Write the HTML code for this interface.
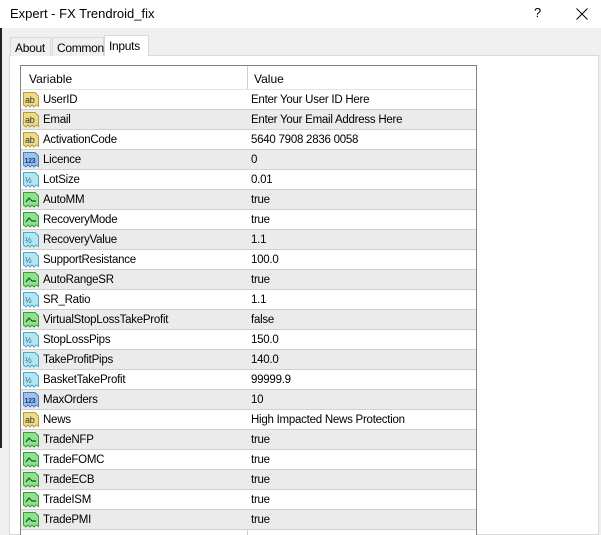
<!DOCTYPE html>
<html><head><meta charset="utf-8"><style>
*{margin:0;padding:0;box-sizing:border-box}
body{width:601px;height:531px;overflow:hidden;background:#f0f0f0;font-family:"Liberation Sans",Tahoma,sans-serif;position:relative}
.title{position:absolute;left:0;top:0;width:601px;height:28px;background:#fff;font-size:13px;color:#000}
.title .t{position:absolute;left:10px;top:6px}
.title .q{position:absolute;left:534px;top:5px;font-size:13px}
.title svg{position:absolute;left:576px;top:8px}
.lb{position:absolute;left:0;top:28px;width:2px;height:420px;background:#222}
.tab{position:absolute;top:37px;height:19px;background:#f0f0f0;border:1px solid #d9d9d9;border-bottom:none;font-size:12px;padding:3px 0 0 4px;letter-spacing:-0.3px;white-space:nowrap}
.tab.a{top:35px;height:21px;background:#fff;border-color:#d9d9d9;z-index:2;padding-top:3px}
.panel{position:absolute;left:9px;top:55px;width:590px;height:480px;background:#fff;border:1px solid #d9d9d9}
.list{position:absolute;left:20px;top:65px;width:457px;height:470px;border:1px solid #828282;border-bottom:none;background:#fff;overflow:hidden}
.hdr{height:24px;font-size:12px;position:relative;border-bottom:1px solid #e5e5e5}
.hdr span{position:absolute;top:6px}
.row{height:20px;position:relative;font-size:11.5px;letter-spacing:-0.25px;border-bottom:1px solid #d0d0d0;background:#fff}
.row.g{background:#ebebeb}
.row svg{position:absolute;left:2px;top:2px}
.row .n{position:absolute;left:22px;top:4px}
.row .v{position:absolute;left:230px;top:4px}
.div{position:absolute;left:226px;top:0;width:1px;height:470px;background:#d0d0d0}
</style></head><body>
<div class="title"><span class="t">Expert - FX Trendroid_fix</span><span class="q">?</span><svg width="12" height="12"><path d="M0.5 0.5L11.5 11.5M11.5 0.5L0.5 11.5" stroke="#000" stroke-width="1"/></svg></div>
<div class="lb"></div>
<div class="panel"></div>
<div class="tab" style="left:10px;width:41px">About</div>
<div class="tab" style="left:52px;width:52px">Common</div>
<div class="tab a" style="left:104px;width:45px">Inputs</div>
<div class="list">
<div class="div"></div>
<div class="hdr"><span style="left:8px">Variable</span><span style="left:233px">Value</span></div>
<div id="rows"></div>
</div>
<script>
var R=[["UserID","ab","Enter Your User ID Here"],["Email","ab","Enter Your Email Address Here"],["ActivationCode","ab","5640 7908 2836 0058"],["Licence","n","0"],["LotSize","h","0.01"],["AutoMM","b","true"],["RecoveryMode","b","true"],["RecoveryValue","h","1.1"],["SupportResistance","h","100.0"],["AutoRangeSR","b","true"],["SR_Ratio","h","1.1"],["VirtualStopLossTakeProfit","b","false"],["StopLossPips","h","150.0"],["TakeProfitPips","h","140.0"],["BasketTakeProfit","h","99999.9"],["MaxOrders","n","10"],["News","ab","High Impacted News Protection"],["TradeNFP","b","true"],["TradeFOMC","b","true"],["TradeECB","b","true"],["TradeISM","b","true"],["TradePMI","b","true"]];
var C={ab:["#eedb8a","#b89a3a"],n:["#9cc0ea","#4a7cc0"],h:["#b4e6f2","#4aa8c8"],b:["#8fe08f","#3a9a3a"]};
var h="";
R.forEach(function(r,i){var c=C[r[1]];var inner="";
if(r[1]=="ab")inner='<text x="2" y="11" font-size="9" font-family="Liberation Sans" fill="#333">ab</text>';
else if(r[1]=="n")inner='<text x="1.5" y="11" font-size="7" font-weight="bold" font-family="Liberation Sans" fill="#1a3a80">123</text>';
else if(r[1]=="h")inner='<text x="2" y="11" font-size="8" font-family="Liberation Sans" fill="#1a5a7a">½</text>';
else inner='<path d="M3 10 L6 6 L9 9 L13 9" stroke="#135a13" stroke-width="1.2" fill="none"/>';
h+='<div class="row'+(i%2?' g':'')+'"><svg width="16" height="16"><path d="M0.5 0.5H12L15.5 4V14.5L13 13L11 15L9 13L7 15L5 13L3 15L0.5 13Z" fill="'+c[0]+'" stroke="'+c[1]+'"/>'+inner+'</svg><span class="n">'+r[0]+'</span><span class="v">'+r[2]+'</span></div>';});
document.getElementById("rows").innerHTML=h;
</script>
</body></html>
